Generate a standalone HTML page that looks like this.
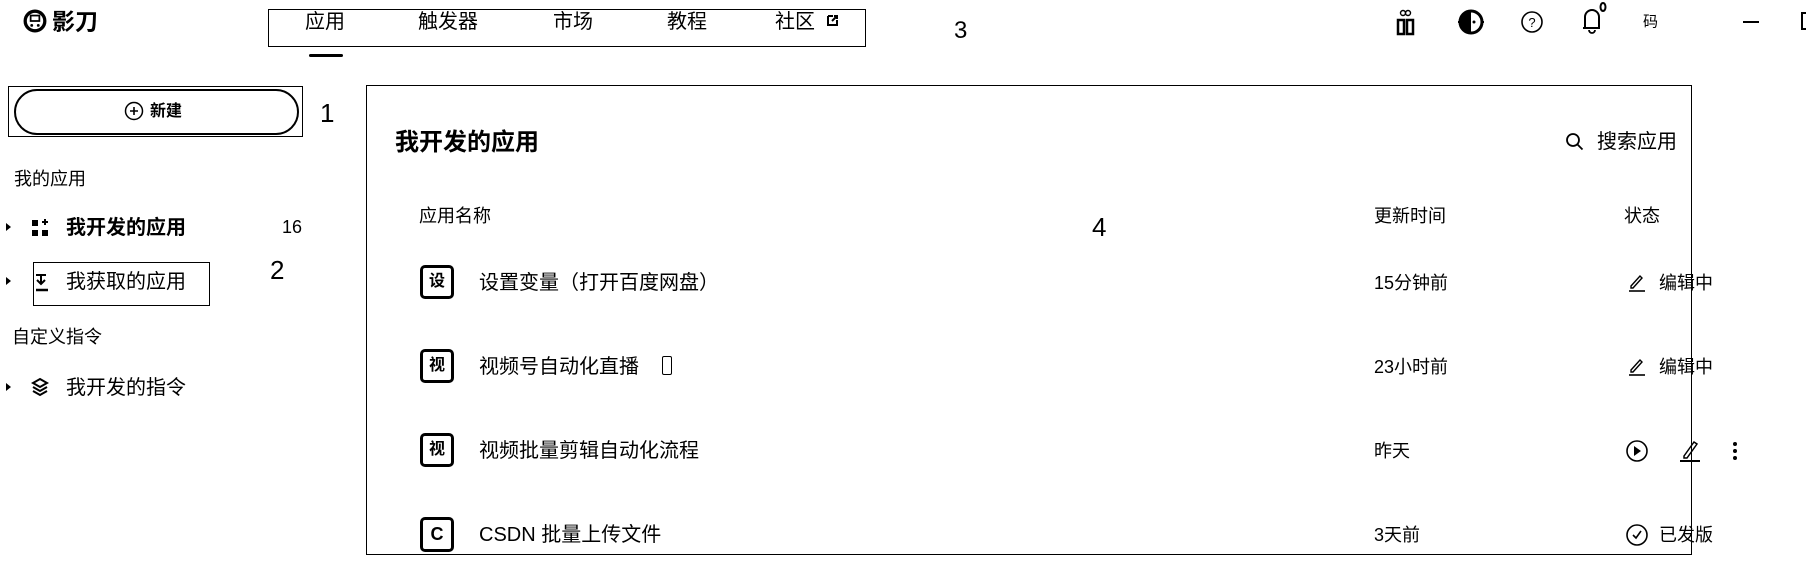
<!DOCTYPE html>
<html><head><meta charset="utf-8"><style>
*{margin:0;padding:0;box-sizing:border-box}
body{width:1806px;height:572px;background:#fff;position:relative;overflow:hidden;font-family:"Liberation Sans","Noto Sans CJK SC",sans-serif;color:#000}
.a{position:absolute;white-space:nowrap;line-height:1}
.t{transform:translateY(-50%)}
svg{position:absolute}
</style></head><body>
<!-- logo -->
<svg style="left:23px;top:9px" width="24" height="24" viewBox="0 0 22 22"><circle cx="11" cy="11" r="9" fill="none" stroke="#000" stroke-width="3"/><rect x="7" y="6" width="8" height="5" fill="none" stroke="#000" stroke-width="1.6"/><circle cx="8" cy="15" r="1.3"/><circle cx="14" cy="15" r="1.3"/></svg>
<div class="a t" style="left:52px;top:22px;font-size:23px;font-weight:bold">影刀</div>
<!-- nav -->
<div class="a" style="left:268px;top:9px;width:598px;height:38px;border:1.5px solid #000"></div>
<div class="a t" style="left:305px;top:22px;font-size:20px">应用</div>
<div class="a t" style="left:418px;top:22px;font-size:20px">触发器</div>
<div class="a t" style="left:553px;top:22px;font-size:20px">市场</div>
<div class="a t" style="left:667px;top:22px;font-size:20px">教程</div>
<div class="a t" style="left:775px;top:22px;font-size:20px">社区</div>
<svg style="left:826px;top:14px" width="13" height="13" viewBox="0 0 13 13"><path d="M2 2h5M2 2v9h9V6" fill="none" stroke="#000" stroke-width="2"/><path d="M6 7l5-5M8 2h3v3" fill="none" stroke="#000" stroke-width="2"/></svg>
<div class="a" style="left:309px;top:54px;width:34px;height:3px;background:#000;border-radius:2px"></div>
<div class="a t" style="left:954px;top:31px;font-size:24px">3</div>
<!-- right icons -->
<svg style="left:1395px;top:8px" width="22" height="28" viewBox="0 0 22 28"><circle cx="8" cy="5" r="2.5" fill="none" stroke="#000" stroke-width="1.4"/><circle cx="13" cy="5" r="2.5" fill="none" stroke="#000" stroke-width="1.4"/><rect x="3" y="12" width="6" height="14" fill="none" stroke="#000" stroke-width="2.5"/><rect x="12" y="12" width="6" height="14" fill="none" stroke="#000" stroke-width="2.5"/></svg>
<svg style="left:1456px;top:8px" width="30" height="28" viewBox="0 0 30 28"><circle cx="15" cy="14" r="11" fill="none" stroke="#000" stroke-width="3"/><path d="M15 3a11 11 0 0 0 0 22z"/><circle cx="18" cy="14" r="1.5"/><path d="M2 14h2M26 14h2" stroke="#000" stroke-width="2"/></svg>
<svg style="left:1520px;top:10px" width="24" height="24" viewBox="0 0 24 24"><circle cx="12" cy="12" r="10" fill="none" stroke="#000" stroke-width="1.6"/><text x="12" y="17" font-size="13" text-anchor="middle" font-family="Liberation Sans">?</text></svg>
<svg style="left:1578px;top:2px" width="30" height="34" viewBox="0 0 30 34"><path d="M7 26V15a7 7 0 0 1 14 0v11H5" fill="none" stroke="#000" stroke-width="2"/><path d="M11 28a3 3 0 0 0 6 0" fill="none" stroke="#000" stroke-width="1.8"/><ellipse cx="25" cy="5" rx="2.5" ry="4" fill="none" stroke="#000" stroke-width="2"/></svg>
<div class="a t" style="left:1643px;top:22px;font-size:15px">码</div>
<div class="a" style="left:1743px;top:21px;width:16px;height:2px;background:#000"></div>
<div class="a" style="left:1801px;top:12px;width:10px;height:18px;border:2px solid #000"></div>
<!-- sidebar -->
<div class="a" style="left:8px;top:86px;width:295px;height:51px;border:1.2px solid #000"></div>
<div class="a" style="left:14px;top:89px;width:285px;height:46px;border:2px solid #000;border-radius:24px"></div>
<svg style="left:124px;top:101px" width="20" height="20" viewBox="0 0 20 20"><circle cx="10" cy="10" r="8.5" fill="none" stroke="#000" stroke-width="1.5"/><path d="M10 6v8M6 10h8" stroke="#000" stroke-width="1.6"/></svg>
<div class="a t" style="left:150px;top:112px;font-size:16px;font-weight:bold">新建</div>
<div class="a t" style="left:320px;top:113px;font-size:26px">1</div>
<div class="a t" style="left:14px;top:179px;font-size:18px">我的应用</div>
<svg style="left:5px;top:222px" width="8" height="10" viewBox="0 0 8 10"><path d="M1 1l5 4-5 4z"/></svg>
<svg style="left:31px;top:218px" width="20" height="20" viewBox="0 0 20 20"><rect x="1" y="2" width="6" height="6"/><rect x="1" y="12" width="6" height="6"/><rect x="11" y="12" width="6" height="6"/><path d="M11 4h6M14 1v6" stroke="#000" stroke-width="2"/></svg>
<div class="a t" style="left:66px;top:228px;font-size:20px;font-weight:bold">我开发的应用</div>
<div class="a t" style="left:282px;top:227px;font-size:18px">16</div>
<div class="a" style="left:33px;top:262px;width:177px;height:44px;border:1.2px solid #000"></div>
<svg style="left:5px;top:276px" width="8" height="10" viewBox="0 0 8 10"><path d="M1 1l5 4-5 4z"/></svg>
<svg style="left:33px;top:272px" width="18" height="22" viewBox="0 0 18 22"><path d="M3 3h10M8 3v8M4 8l4 4 4-4" fill="none" stroke="#000" stroke-width="2"/><path d="M3 18h12" stroke="#000" stroke-width="2.5"/></svg>
<div class="a t" style="left:66px;top:282px;font-size:20px">我获取的应用</div>
<div class="a t" style="left:270px;top:270px;font-size:26px">2</div>
<div class="a t" style="left:12px;top:337px;font-size:18px">自定义指令</div>
<svg style="left:5px;top:382px" width="8" height="10" viewBox="0 0 8 10"><path d="M1 1l5 4-5 4z"/></svg>
<svg style="left:30px;top:377px" width="20" height="20" viewBox="0 0 20 20"><path d="M10 2l7 4-7 4-7-4z" fill="none" stroke="#000" stroke-width="2"/><path d="M3 10l7 4 7-4M3 14l7 4 7-4" fill="none" stroke="#000" stroke-width="2"/></svg>
<div class="a t" style="left:66px;top:388px;font-size:20px">我开发的指令</div>
<!-- main -->
<div class="a" style="left:366px;top:85px;width:1326px;height:470px;border:1.2px solid #000"></div>
<div class="a t" style="left:395px;top:143px;font-size:24px;font-weight:bold">我开发的应用</div>
<svg style="left:1565px;top:132px" width="20" height="20" viewBox="0 0 20 20"><circle cx="8" cy="8" r="6" fill="none" stroke="#000" stroke-width="1.8"/><path d="M12.5 12.5l5 5" stroke="#000" stroke-width="1.8"/></svg>
<div class="a t" style="left:1597px;top:142px;font-size:20px">搜索应用</div>
<div class="a t" style="left:419px;top:216px;font-size:18px">应用名称</div>
<div class="a t" style="left:1374px;top:216px;font-size:18px">更新时间</div>
<div class="a t" style="left:1624px;top:216px;font-size:18px">状态</div>
<div class="a t" style="left:1092px;top:227px;font-size:26px">4</div>

<div class="a" style="left:420px;top:265px;width:34px;height:34px;border:3px solid #000;border-radius:5px;font-size:16px;font-weight:bold;text-align:center;line-height:28px">设</div>
<div class="a t" style="left:479px;top:283px;font-size:20px">设置变量（打开百度网盘）</div>
<div class="a t" style="left:1374px;top:283px;font-size:18px">15分钟前</div>

<div class="a" style="left:420px;top:349px;width:34px;height:34px;border:3px solid #000;border-radius:5px;font-size:16px;font-weight:bold;text-align:center;line-height:28px">视</div>
<div class="a t" style="left:479px;top:367px;font-size:20px">视频号自动化直播</div>
<div class="a" style="left:662px;top:356px;width:10px;height:19px;border:1.3px solid #000;border-radius:2px"></div>
<div class="a t" style="left:1374px;top:367px;font-size:18px">23小时前</div>

<div class="a" style="left:420px;top:433px;width:34px;height:34px;border:3px solid #000;border-radius:5px;font-size:16px;font-weight:bold;text-align:center;line-height:28px">视</div>
<div class="a t" style="left:479px;top:451px;font-size:20px">视频批量剪辑自动化流程</div>
<div class="a t" style="left:1374px;top:451px;font-size:18px">昨天</div>

<div class="a" style="left:420px;top:517px;width:34px;height:35px;border:3.5px solid #000;border-radius:5px;font-size:18px;font-weight:bold;text-align:center;line-height:28px">C</div>
<div class="a t" style="left:479px;top:535px;font-size:20px">CSDN 批量上传文件</div>
<div class="a t" style="left:1374px;top:535px;font-size:18px">3天前</div>

<!-- status -->
<svg style="left:1627px;top:272px" width="20" height="20" viewBox="0 0 20 20"><path d="M4 14l9-10 2 2-9 10H4z" fill="none" stroke="#000" stroke-width="1.4"/><path d="M2 19h16" stroke="#000" stroke-width="1.6"/></svg>
<div class="a t" style="left:1659px;top:283px;font-size:18px">编辑中</div>
<svg style="left:1627px;top:356px" width="20" height="20" viewBox="0 0 20 20"><path d="M4 14l9-10 2 2-9 10H4z" fill="none" stroke="#000" stroke-width="1.4"/><path d="M2 19h16" stroke="#000" stroke-width="1.6"/></svg>
<div class="a t" style="left:1659px;top:367px;font-size:18px">编辑中</div>
<svg style="left:1625px;top:439px" width="24" height="24" viewBox="0 0 24 24"><circle cx="12" cy="12" r="10" fill="none" stroke="#000" stroke-width="1.6"/><path d="M9 7l7 5-7 5z"/></svg>
<svg style="left:1677px;top:437px" width="26" height="26" viewBox="0 0 26 26"><path d="M7 19l10-14 3 2-10 14H7z" fill="none" stroke="#000" stroke-width="1.5"/><path d="M3 24h20" stroke="#000" stroke-width="2"/></svg>
<svg style="left:1731px;top:440px" width="8" height="22" viewBox="0 0 8 22"><circle cx="4" cy="4" r="2"/><circle cx="4" cy="11" r="2"/><circle cx="4" cy="18" r="2"/></svg>
<svg style="left:1625px;top:523px" width="24" height="24" viewBox="0 0 24 24"><circle cx="12" cy="12" r="10" fill="none" stroke="#000" stroke-width="1.6"/><path d="M8 12l3 3 5-7" fill="none" stroke="#000" stroke-width="1.6"/></svg>
<div class="a t" style="left:1659px;top:535px;font-size:18px">已发版</div>
</body></html>
